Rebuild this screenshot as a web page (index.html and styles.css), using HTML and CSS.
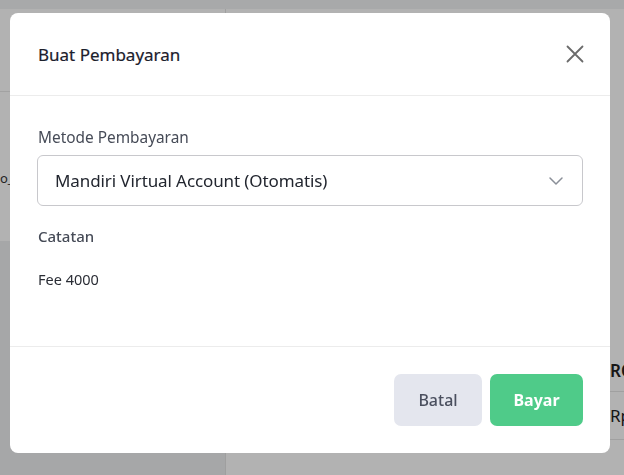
FILE: index.html
```html
<!DOCTYPE html>
<html lang="id">
<head>
<meta charset="utf-8">
<title>Buat Pembayaran</title>
<link rel="stylesheet" href="styles.css">
</head>
<body>
<div class="page">
  <div class="topbar"></div>
  <div class="content">
    <div class="left-card">
      <div class="lc-head"></div>
      <div class="lc-row">o_</div>
    </div>
    <div class="right-card">
      <div class="rc-spacer"></div>
      <div class="rc-row rc-th">RO</div>
      <div class="rc-row">Rp</div>
    </div>
  </div>
</div>
<div class="overlay">
  <div class="dialog">
    <div class="dlg-header">
      <h2 class="dlg-title">Buat Pembayaran</h2>
      <button class="close-btn" aria-label="Tutup">
        <svg width="20" height="20" viewBox="0 0 20 20"><path d="M2.5 2.5 L17.5 17.5 M17.5 2.5 L2.5 17.5" stroke="#6b6b6b" stroke-width="1.8" fill="none" stroke-linecap="round"/></svg>
      </button>
    </div>
    <div class="dlg-body">
      <label class="field-label">Metode Pembayaran</label>
      <div class="select">
        <span>Mandiri Virtual Account (Otomatis)</span>
        <svg width="16" height="10" viewBox="0 0 16 10"><path d="M2 2 L8 8 L14 2" stroke="#8a8f98" stroke-width="1.5" fill="none" stroke-linecap="round" stroke-linejoin="round"/></svg>
      </div>
      <div class="field-label note-label">Catatan</div>
      <div class="note">Fee 4000</div>
    </div>
    <div class="dlg-footer">
      <button class="btn btn-cancel">Batal</button>
      <button class="btn btn-pay">Bayar</button>
    </div>
  </div>
</div>
</body>
</html>
```
FILE: styles.css
```css
* { box-sizing: border-box; }
html, body { margin: 0; padding: 0; }
body {
  width: 624px;
  height: 475px;
  overflow: hidden;
  font-family: "Noto Sans", "Open Sans", sans-serif;
  background: #eeeff1;
}
.page { width: 624px; height: 475px; display: flex; flex-direction: column; }
.topbar { height: 9px; background: #f1f2f4; }
.content { flex: 1; display: flex; }
.left-card { width: 225px; flex-shrink: 0; height: 232px; background: #fff; display: flex; flex-direction: column; }
.lc-head { height: 83px; border-bottom: 1px solid #e8e8e8; }
.lc-row { padding: 77px 0 0 0; font-size: 13px; color: #333; }
.right-card { flex: 1; min-width: 0; background: #fff; display: flex; flex-direction: column; border-left: 1px solid #e4e4e4; }
.rc-spacer { height: 340px; }
.rc-row { height: 48px; display: flex; align-items: center; padding-left: 384px; font-size: 17px; color: #222; border-bottom: 1px solid #e6e6e6; white-space: nowrap; overflow: hidden; }
.rc-th { font-weight: 600; height: 43px; }

.overlay {
  position: fixed;
  inset: 0;
  background: rgba(0, 0, 0, 0.3);
}
.dialog {
  position: absolute;
  left: 10px;
  top: 13px;
  width: 600px;
  height: 440px;
  background: #fff;
  border-radius: 8px;
  display: flex;
  flex-direction: column;
}
.dlg-header {
  height: 83px;
  display: flex;
  align-items: center;
  justify-content: space-between;
  padding: 0 25px 0 28px;
  border-bottom: 1px solid #ececec;
}
.dlg-title {
  margin: 0;
  font-size: 17px;
  font-weight: 400;
  color: #1c202c;
  -webkit-text-stroke: 0.2px #1c202c;
}
.close-btn {
  border: 0;
  background: none;
  padding: 0;
  width: 20px;
  height: 20px;
  display: flex;
}
.dlg-body {
  flex: 1;
  padding: 32px 27px 0 27px;
  display: flex;
  flex-direction: column;
  border-bottom: 1px solid #ececec;
}
.field-label {
  font-size: 15.4px;
  color: #464b57;
  line-height: 20px;
  padding-left: 1px;
}
.select {
  margin-top: 7px;
  height: 51px;
  border: 1px solid #c8c8cc;
  border-radius: 6px;
  display: flex;
  align-items: center;
  justify-content: space-between;
  padding: 0 18px 0 17px;
  font-size: 17px;
  letter-spacing: -0.1px;
  color: #22262f;
}
.note-label {
  margin-top: 20px;
  font-size: 15px;
  font-weight: 500;
}
.note {
  margin-top: 23px;
  font-size: 14.5px;
  color: #2a2d35;
  padding-left: 1px;
}
.dlg-footer {
  height: 106px;
  display: flex;
  justify-content: flex-end;
  align-items: center;
  gap: 8px;
  padding: 0 27px;
}
.btn {
  height: 52px;
  border: 0;
  border-radius: 7px;
  font-family: inherit;
  font-size: 16px;
}
.btn-cancel { width: 88px; background: #e4e6ee; color: #4a4f5e; font-weight: 500; }
.btn-pay { width: 93px; background: #4fcb89; color: #fff; font-weight: 700; }
```
